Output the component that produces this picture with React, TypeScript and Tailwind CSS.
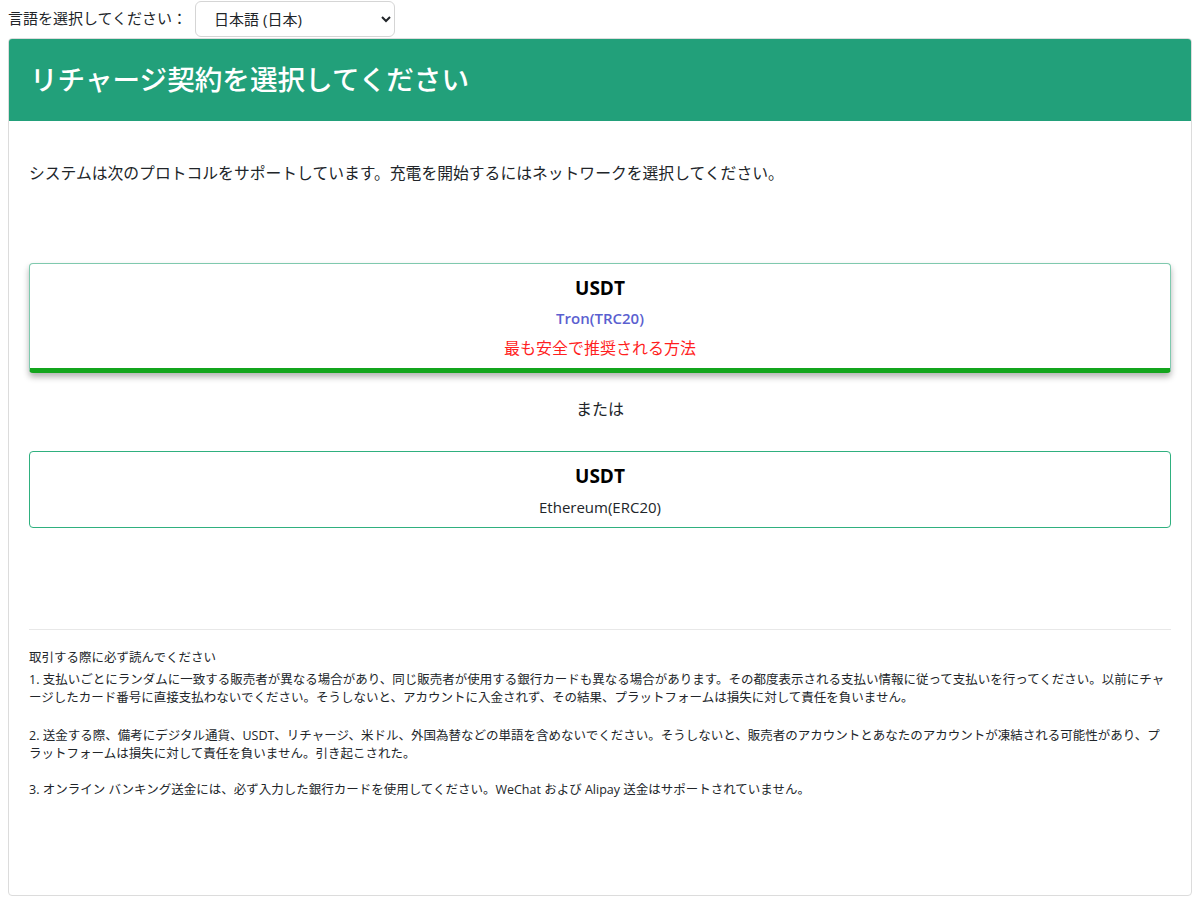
import React, { useState } from "react";

const font = { fontFamily: '"Open Sans", "Noto Sans CJK JP", sans-serif' };

export default function App() {
  const [lang, setLang] = useState("ja");
  const [network, setNetwork] = useState("trc20");

  return (
    <div className="min-h-[900px] bg-white text-[#212529]" style={font}>
      {/* Language bar */}
      <div className="flex items-center h-[37px] px-2 text-[15px]">
        <span className="pr-[8px]">言語を選択してください：</span>
        <select
          value={lang}
          onChange={(e) => setLang(e.target.value)}
          className="w-[200px] h-[36px] border border-[#d5d5d5] rounded-md pl-[14px] pr-3 text-[15px] bg-white outline-none"
        >
          <option value="ja">日本語 (日本)</option>
          <option value="en">English (US)</option>
          <option value="zh">简体中文</option>
        </select>
      </div>

      {/* Main card */}
      <div className="mx-2 mt-[1px] h-[858px] border border-[#dcdcdc] rounded-[4px] flex flex-col">
        <div className="bg-[#22a07a] h-[82px] flex items-center px-[21px] rounded-t-[3px]">
          <h1 className="text-white text-[27.6px] font-medium">リチャージ契約を選択してください</h1>
        </div>

        <div className="px-5 pt-[40px]">
          <p className="text-[15.8px] leading-[24px]">
            システムは次のプロトコルをサポートしています。充電を開始するにはネットワークを選択してください。
          </p>

          <div className="mt-[78px] flex flex-col items-stretch">
            <button
              onClick={() => setNetwork("trc20")}
              className={
                network === "trc20"
                  ? "h-[110px] border border-[#7fc9ae] border-b-[5px] border-b-[#13a51d] rounded-[4px] shadow-[0_4px_6px_rgba(0,0,0,0.3)] flex flex-col items-center pt-[11px] bg-white cursor-pointer"
                  : "h-[110px] border border-[#2fb07f] rounded-[4px] flex flex-col items-center pt-[11px] bg-white cursor-pointer"
              }
            >
              <span className="text-[19px] font-bold leading-[26px] text-black">USDT</span>
              <span className="text-[15px] font-semibold text-[#5b5fd0] leading-[20px] mt-[7px]">Tron(TRC20)</span>
              <span className="text-[16px] text-[#ff1f1f] leading-[20px] mt-[10px]">最も安全で推奨される方法</span>
            </button>

            <div className="text-center text-[16px] mt-[24px] leading-[24px]">または</div>

            <button
              onClick={() => setNetwork("erc20")}
              className={
                network === "erc20"
                  ? "mt-[30px] h-[77px] border border-[#7fc9ae] border-b-[5px] border-b-[#13a51d] rounded-[4px] shadow-[0_4px_6px_rgba(0,0,0,0.3)] flex flex-col items-center pt-[11px] bg-white cursor-pointer"
                  : "mt-[30px] h-[77px] border border-[#2fb07f] rounded-[4px] flex flex-col items-center pt-[11px] bg-white cursor-pointer"
              }
            >
              <span className="text-[19px] font-bold leading-[26px] text-black">USDT</span>
              <span className="text-[15px] leading-[20px] mt-[8px]">Ethereum(ERC20)</span>
            </button>
          </div>

          <div className="mt-[101px] border-t border-[#e8e8e8] pt-[19px] text-[12.5px] leading-[18px]">
            <p>取引する際に必ず読んでください</p>
            <p className="mt-[4px]">
              1. 支払いごとにランダムに一致する販売者が異なる場合があり、同じ販売者が使用する銀行カードも異なる場合があります。その都度表示される支払い情報に従って支払いを行ってください。以前にチャージしたカード番号に直接支払わないでください。そうしないと、アカウントに入金されず、その結果、プラットフォームは損失に対して責任を負いません。
            </p>
            <p className="mt-[20px]">
              2. 送金する際、備考にデジタル通貨、USDT、リチャージ、米ドル、外国為替などの単語を含めないでください。そうしないと、販売者のアカウントとあなたのアカウントが凍結される可能性があり、プラットフォームは損失に対して責任を負いません。引き起こされた。
            </p>
            <p className="mt-[18px]">
              3. オンライン バンキング送金には、必ず入力した銀行カードを使用してください。WeChat および Alipay 送金はサポートされていません。
            </p>
          </div>
        </div>
      </div>
    </div>
  );
}
